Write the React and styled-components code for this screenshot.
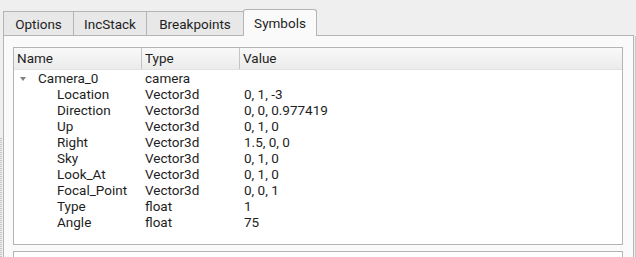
import React from "react";
import styled, { createGlobalStyle } from "styled-components";

const Global = createGlobalStyle`
  html, body { margin: 0; padding: 0; background: #efefef; }
  body { font-family: Roboto, "Noto Sans", "DejaVu Sans", sans-serif; font-size: 13px; color: #1e1e1e; overflow: hidden; }
`;

const Window = styled.div`
  width: 636px;
  height: 257px;
  box-sizing: border-box;
  padding: 10px 0 0 3px;
  position: relative;
  overflow: hidden;
  background: #efefef;
`;

const Splitter = styled.div`
  position: absolute;
  left: 0;
  top: 138px;
  width: 2px;
  height: 120px;
  background-image: repeating-linear-gradient(to bottom, #c4c4c4 0 1px, transparent 1px 2px);
`;

const TabBar = styled.div`
  display: flex;
  align-items: flex-end;
  height: 26px;
  position: relative;
  z-index: 2;
`;

const Tab = styled.div`
  box-sizing: border-box;
  height: ${(p) => (p.$active ? "27px" : "25px")};
  width: ${(p) => p.$w}px;
  margin-left: ${(p) => (p.$active ? "-1px" : "0")};
  display: flex;
  align-items: center;
  justify-content: center;
  padding-top: ${(p) => (p.$active ? "2px" : "3px")};
  background: ${(p) => (p.$active ? "#fafafa" : "#e8e8e8")};
  border: 1px solid #b4b4b4;
  border-bottom: ${(p) => (p.$active ? "none" : "1px solid #b4b4b4")};
  border-left: ${(p) => (p.$first || p.$active ? "1px solid #b4b4b4" : "none")};
  border-radius: ${(p) => (p.$active ? "3px 3px 0 0" : "0")};
  color: #1e1e1e;
  font-size: 13.5px;
  line-height: 1;
  white-space: nowrap;
`;

const Pane = styled.div`
  box-sizing: border-box;
  width: 631px;
  height: 230px;
  margin-top: -1px;
  background: #fafafa;
  border: 1px solid #b4b4b4;
  padding: 11px 10px 0 9px;
  display: flex;
  flex-direction: column;
  gap: 6px;
`;

const Tree = styled.div`
  box-sizing: border-box;
  width: 610px;
  height: 198px;
  flex: none;
  background: #ffffff;
  border: 1px solid #b4b4b4;
  display: flex;
  flex-direction: column;
`;

const Header = styled.div`
  display: grid;
  grid-template-columns: 128px 98px 1fr;
  height: 21px;
  background: linear-gradient(to bottom, #f9f9f9, #ebebeb);
  border-bottom: 1px solid #e2e2e2;
`;

const HeaderCell = styled.div`
  display: flex;
  align-items: center;
  padding-left: 3px;
  padding-top: 1px;
  border-right: ${(p) => (p.$last ? "none" : "1px solid #c4c4c4")};
  font-size: 13.5px;
  line-height: 1;
`;

const Row = styled.div`
  display: grid;
  grid-template-columns: 128px 98px 1fr;
  height: 16px;
  align-items: center;
  line-height: 16px;
  font-size: 13.5px;
`;

const NameCell = styled.div`
  display: flex;
  align-items: center;
  padding-left: ${(p) => p.$indent}px;
  white-space: nowrap;
`;

const Cell = styled.div`
  padding-left: ${(p) => p.$pad}px;
  white-space: nowrap;
`;

const Arrow = styled.span`
  width: 0;
  height: 0;
  border-left: 3.5px solid transparent;
  border-right: 3.5px solid transparent;
  border-top: 4px solid #808080;
  margin-right: 12px;
  margin-top: 1px;
`;

const Lower = styled.div`
  box-sizing: border-box;
  width: 610px;
  height: 40px;
  flex: none;
  background: #ffffff;
  border: 1px solid #b4b4b4;
`;

const RightEdge = styled.div`
  position: absolute;
  right: 0;
  top: 36px;
  width: 1px;
  height: 230px;
  background: #c8c8c8;
`;

const children = [
  ["Location", "Vector3d", "0, 1, -3"],
  ["Direction", "Vector3d", "0, 0, 0.977419"],
  ["Up", "Vector3d", "0, 1, 0"],
  ["Right", "Vector3d", "1.5, 0, 0"],
  ["Sky", "Vector3d", "0, 1, 0"],
  ["Look_At", "Vector3d", "0, 1, 0"],
  ["Focal_Point", "Vector3d", "0, 0, 1"],
  ["Type", "float", "1"],
  ["Angle", "float", "75"],
];

const tabs = [
  { label: "Options", w: 71 },
  { label: "IncStack", w: 73 },
  { label: "Breakpoints", w: 97 },
  { label: "Symbols", w: 74, active: true },
];

export default function App() {
  return (
    <>
      <Global />
      <Window>
        <Splitter />
        <TabBar>
          {tabs.map((t, i) => (
            <Tab key={t.label} $w={t.w} $active={t.active} $first={i === 0}>
              {t.label}
            </Tab>
          ))}
        </TabBar>
        <Pane>
          <Tree>
            <Header>
              <HeaderCell>Name</HeaderCell>
              <HeaderCell>Type</HeaderCell>
              <HeaderCell $last>Value</HeaderCell>
            </Header>
            <Row>
              <NameCell $indent={6}>
                <Arrow />
                Camera_0
              </NameCell>
              <Cell $pad={3}>camera</Cell>
              <Cell $pad={3}></Cell>
            </Row>
            {children.map(([n, t, v]) => (
              <Row key={n}>
                <NameCell $indent={43}>{n}</NameCell>
                <Cell $pad={3}>{t}</Cell>
                <Cell $pad={4}>{v}</Cell>
              </Row>
            ))}
          </Tree>
          <Lower />
        </Pane>
        <RightEdge />
      </Window>
    </>
  );
}
